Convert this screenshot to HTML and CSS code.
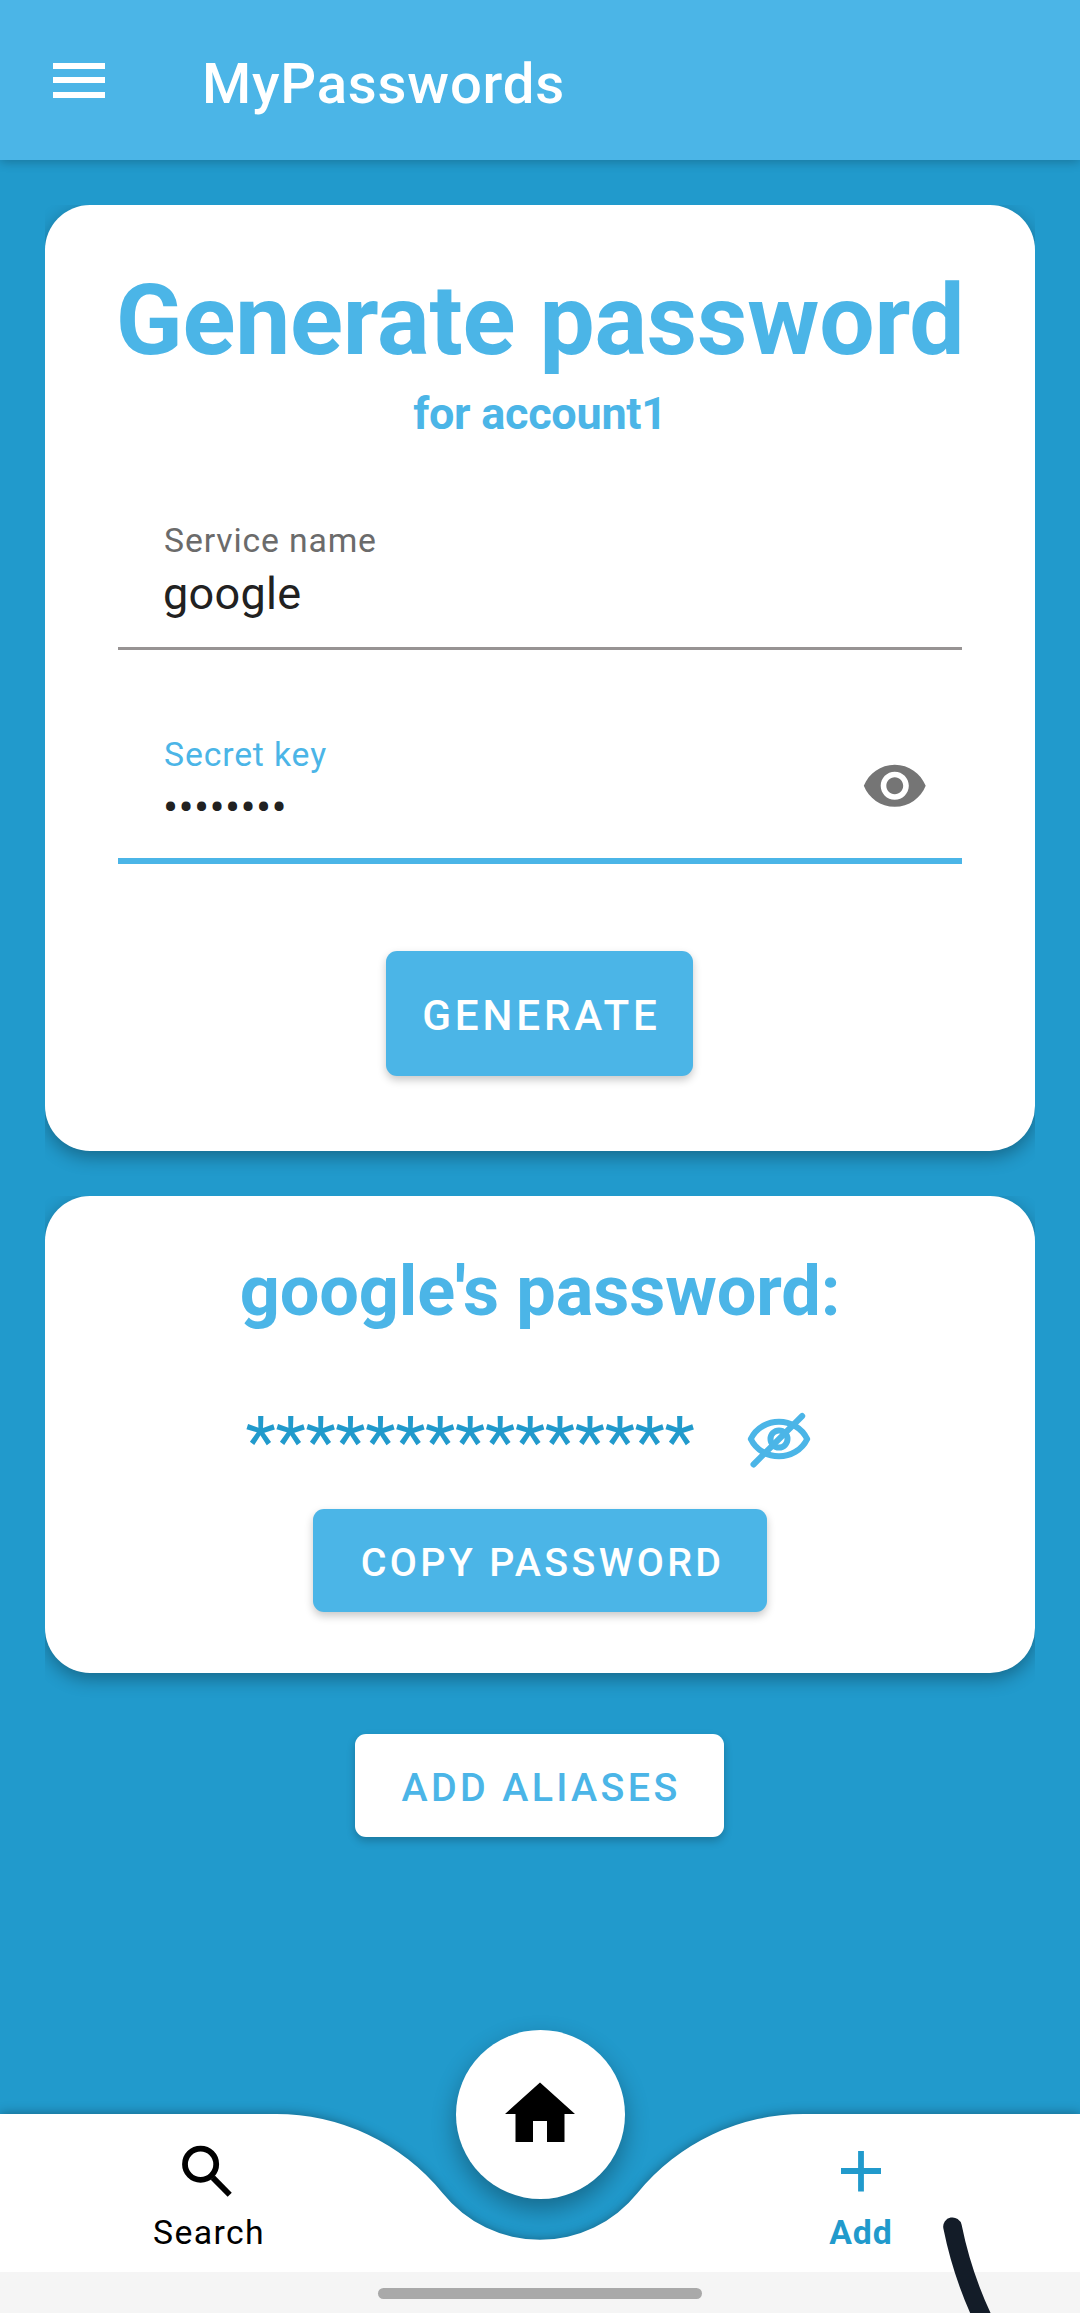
FILE: index.html
```html
<!DOCTYPE html>
<html lang="en">
<head>
<meta charset="utf-8">
<title>MyPasswords</title>
<link rel="stylesheet" href="styles.css">
</head>
<body>
<div class="app">
  <header class="appbar">
    <svg class="menu-icon" viewBox="0 0 52 36" aria-label="Menu"><path d="M0 1h52v6H0zM0 15h52v6H0zM0 30h52v6H0z"/></svg>
    <h1 class="appbar-title">MyPasswords</h1>
  </header>

  <main class="content">
    <section class="card generator">
      <h2 class="heading">Generate password</h2>
      <p class="subheading">for account1</p>
      <div class="field">
        <div class="field-text">
          <span class="label">Service name</span>
          <span class="value">google</span>
        </div>
      </div>
      <div class="field focused">
        <div class="field-text">
          <span class="label">Secret key</span>
          <span class="value">••••••••</span>
        </div>
        <svg class="eye-icon" viewBox="0 0 24 24"><path d="M12 4.5C7 4.5 2.73 7.61 1 12c1.73 4.39 6 7.5 11 7.5s9.27-3.11 11-7.5c-1.73-4.39-6-7.5-11-7.5zM12 17c-2.76 0-5-2.24-5-5s2.24-5 5-5 5 2.24 5 5-2.24 5-5 5zm0-8c-1.66 0-3 1.34-3 3s1.34 3 3 3 3-1.34 3-3-1.34-3-3-3z"/></svg>
      </div>
      <button class="button generate">GENERATE</button>
    </section>

    <section class="card result">
      <h2 class="result-title">google's password:</h2>
      <div class="secret">
        <span class="mask">***************</span>
        <svg class="hide-icon" viewBox="0 0 68 68">
          <path d="M5.8 34C17 11 51 11 62.2 34C51 57 17 57 5.8 34Z"/>
          <circle cx="34" cy="34" r="8.5"/>
          <path d="M57.2 11L8.5 59.5"/>
        </svg>
      </div>
      <button class="button copy">COPY PASSWORD</button>
    </section>

    <button class="button aliases">ADD ALIASES</button>
  </main>

  <nav class="bottom-nav">
    <svg class="nav-shape" viewBox="0 0 1080 158"><path d="M0 0H275A215 215 0 0 1 442.5 79A125 125 0 0 0 637.5 79A215 215 0 0 1 805 0H1080V158H0Z"/></svg>
    <a class="tab search">
      <svg class="tab-icon" viewBox="0 0 68 68"><circle cx="26.6" cy="27.2" r="15.6"/><path d="M38.8 40.6L55.7 57.7"/></svg>
      <span class="tab-label">Search</span>
    </a>
    <a class="tab add">
      <svg class="tab-icon" viewBox="0 0 68 68"><path d="M14 34H54M34 14V54.5"/></svg>
      <span class="tab-label">Add</span>
    </a>
    <a class="fab">
      <svg class="home-icon" viewBox="0 0 24 24"><path d="M10 20v-6h4v6h5v-8h3L12 3 2 12h3v8z"/></svg>
    </a>
  </nav>

  <footer class="system-bar"><span class="handle"></span></footer>
  <svg class="pen-mark" viewBox="0 0 70 110"><path d="M13.5 23.7Q24 76 48 124"/></svg>
</div>
</body>
</html>
```
FILE: styles.css
```css
* {
  box-sizing: border-box;
}

body {
  margin: 0;
  font-family: Roboto, sans-serif;
}

h1, h2, p {
  margin: 0;
}

svg {
  display: block;
  flex: none;
}

.app {
  position: relative;
  display: flex;
  flex-direction: column;
  width: 1080px;
  height: 2313px;
  overflow: hidden;
  background: #219acc;
}

.appbar {
  display: flex;
  align-items: flex-start;
  height: 160px;
  padding: 52px 53px;
  background: #4bb5e7;
  box-shadow: 0 2px 10px rgba(0, 0, 0, .24);
}

.menu-icon {
  width: 52px;
  height: 36px;
  margin: 10px 97px 0 0;
  fill: #fff;
}

.appbar-title {
  font-size: 56.25px;
  line-height: 64px;
  font-weight: 500;
  letter-spacing: .8px;
  color: #fff;
}

.content {
  flex: 1;
  display: flex;
  flex-direction: column;
  align-items: center;
  padding: 45px 45px 0;
}

/* Elevation is visible only below the card and inside its corners. */
.card {
  display: flex;
  flex-direction: column;
  align-items: center;
  width: 990px;
  border-radius: 45px;
  background: #fff;
  box-shadow: 0 6px 18px rgba(0, 0, 0, .32);
  clip-path: inset(0 0 -44px 0);
}

.generator {
  height: 946px;
  padding: 58px 73px 0;
}

.heading {
  font-size: 98.2px;
  line-height: 115px;
  font-weight: 700;
  letter-spacing: -.2px;
  white-space: nowrap;
  color: #4bb5e7;
}

.subheading {
  margin-top: 9px;
  font-size: 45px;
  line-height: 53px;
  font-weight: 700;
  letter-spacing: -.28px;
  color: #4bb5e7;
}

.field {
  display: flex;
  justify-content: space-between;
  align-items: flex-start;
  width: 844px;
  height: 158px;
  margin-top: 52px;
  padding: 29px 34px 0 45px;
  border-bottom: 3px solid #979393;
}

.field.focused {
  margin-top: 56px;
  border-bottom: 6px solid #4bb5e7;
}

.field-text {
  display: flex;
  flex-direction: column;
  gap: 6px;
}

.label {
  padding-left: 1px;
  font-size: 33.75px;
  line-height: 40px;
  letter-spacing: .85px;
  color: #6b6b6b;
}

.focused .label {
  color: #4bb5e7;
}

.value {
  font-size: 45px;
  line-height: 53px;
  letter-spacing: .3px;
  color: #212121;
}

.eye-icon {
  width: 67.5px;
  height: 67.5px;
  margin-top: 17px;
  fill: #757575;
}

.button {
  padding: 0 0 0 3px;
  border: 0;
  border-radius: 11px;
  font-family: inherit;
  font-weight: 500;
  font-size: 39.4px;
  letter-spacing: 3.35px;
  color: #fff;
  background: #4bb5e7;
  box-shadow: 0 4px 8px rgba(0, 0, 0, .22);
}

.generate {
  width: 307px;
  height: 125px;
  margin: 87px 1px 0 0;
  padding: 4px 0 0 4px;
  font-size: 42.2px;
  letter-spacing: 3.85px;
}

.result {
  height: 477px;
  margin-top: 45px;
  padding-top: 54px;
}

.result-title {
  font-size: 70.3px;
  line-height: 82px;
  font-weight: 700;
  letter-spacing: -.12px;
  color: #4bb5e7;
}

.secret {
  display: flex;
  align-items: center;
  gap: 51px;
  margin-top: 69px;
}

.mask {
  font-size: 70.3px;
  line-height: 82px;
  letter-spacing: -.35px;
  color: #219acc;
}

.hide-icon {
  width: 68px;
  height: 68px;
  margin: -6px 21px 0 0;
  fill: none;
  stroke: #4bb5e7;
  stroke-width: 6;
  stroke-linecap: round;
  stroke-linejoin: round;
}

.copy {
  width: 454px;
  height: 103px;
  margin-top: 26px;
  padding: 3px 0 0 5px;
}

.aliases {
  width: 369px;
  height: 103px;
  margin: 61px 1px 0 0;
  padding-top: 3px;
  color: #4bb5e7;
  background: #fff;
}

.bottom-nav {
  position: relative;
  display: grid;
  grid-template-columns: 416px 248px 394px;
  height: 158px;
}

.nav-shape {
  position: absolute;
  inset: 0;
  width: 1080px;
  height: 158px;
  overflow: visible;
  fill: #fff;
  filter: drop-shadow(0 0 6px rgba(0, 0, 0, .36));
}

.tab {
  position: relative;
  display: flex;
  flex-direction: column;
  align-items: center;
  padding-top: 23px;
}

.tab.add {
  grid-column: 3;
}

.tab-icon {
  width: 68px;
  height: 68px;
  fill: none;
  stroke: currentColor;
  stroke-width: 5.8;
}

.tab-label {
  margin-top: 8px;
  padding-left: 2px;
  font-size: 33.75px;
  line-height: 40px;
  letter-spacing: 1.4px;
}

.search {
  color: #000;
}

.add {
  color: #219acc;
}

.add .tab-label {
  padding-left: 0;
  font-weight: 700;
  letter-spacing: .9px;
}

.fab {
  position: absolute;
  left: 455.5px;
  top: -84px;
  display: grid;
  place-items: center;
  width: 169px;
  height: 169px;
  border-radius: 50%;
  background: #fff;
  box-shadow: 0 10px 24px rgba(0, 0, 0, .32);
}

.home-icon {
  width: 84px;
  height: 84px;
  margin-bottom: 2px;
  fill: #000;
}

.system-bar {
  position: relative;
  display: flex;
  justify-content: center;
  height: 41px;
  padding-top: 16px;
  background: #f5f5f5;
}

.handle {
  width: 324px;
  height: 11px;
  border-radius: 5.5px;
  background: #a9a9a9;
}

.pen-mark {
  position: absolute;
  left: 939px;
  top: 2203px;
  width: 70px;
  height: 110px;
  fill: none;
  stroke: #131c28;
  stroke-width: 18.6;
  stroke-linecap: round;
}
```
